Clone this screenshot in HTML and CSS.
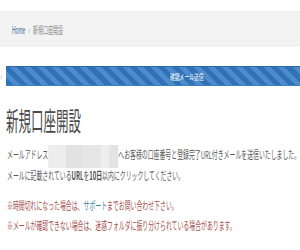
FILE: index.html
```html
<!DOCTYPE html>
<html lang="ja">
<head>
<meta charset="utf-8">
<title>新規口座開設</title>
<link rel="stylesheet" href="styles.css">
</head>
<body>
<nav class="crumb">
  <div class="crumb-text"><a class="crumb-home" href="#">Home</a><span class="crumb-sep">›</span><span class="crumb-cur">新規口座開設</span></div>
</nav>
<div class="steps">
  <span class="steps-prev">‹</span>
  <div class="steps-bar"><span class="steps-label">確認メール送信</span></div>
</div>
<h1 class="title"><span class="title-text">新規口座開設</span></h1>
<div class="body">
  <div class="body-inner">
    <p class="para">メールアドレス<span class="masked"></span>へお客様の口座番号と登録完了URL付きメールを送信いたしました。<br>メールに記載されている<b>URL</b>を<b>10日</b>以内にクリックしてください。</p>
    <p class="para note">※時間切れになった場合は、<a class="link" href="#">サポート</a>までお問い合わせ下さい。<br>※メールが確認できない場合は、迷惑フォルダに振り分けられている場合があります。</p>
  </div>
</div>
</body>
</html>
```
FILE: styles.css
```css
html, body {
  margin: 0;
  padding: 0;
  background: #fff;
}
body {
  font-family: "Noto Sans CJK JP", "Noto Sans", sans-serif;
  color: #5a5a5a;
  overflow: hidden;
}
.crumb {
  margin-top: 11px;
  height: 36px;
  background: #f3f3f3;
  border-top: 1px solid #ededed;
  box-sizing: border-box;
  display: flex;
  align-items: center;
  padding-left: 12px;
}
.crumb-text {
  font-family: "Liberation Sans", "Noto Sans CJK JP", sans-serif;
  font-size: 10px;
  white-space: nowrap;
  transform: scaleX(0.5);
  transform-origin: 0 50%;
}
.crumb-home {
  color: #3f6f9f;
  text-decoration: none;
}
.crumb-sep {
  color: #aaa;
  margin: 0 6px;
}
.crumb-cur {
  color: #8f8f8f;
}
.steps {
  margin-top: 19px;
  display: flex;
  align-items: center;
  height: 20px;
}
.steps-prev {
  width: 6px;
  color: #ccc;
  font-size: 10px;
  line-height: 20px;
  overflow: hidden;
}
.steps-bar {
  flex: 1;
  height: 20px;
  box-sizing: border-box;
  border-top: 1px solid #2c68a6;
  border-bottom: 1px solid #3f7fbf;
  background: repeating-linear-gradient(45deg, #2f72b6 0 5px, #4d8bca 5px 10px);
  display: flex;
  align-items: center;
  padding-left: 164px;
}
.steps-label {
  color: #fff;
  font-size: 8px;
  white-space: nowrap;
  transform: scaleX(0.6);
  transform-origin: 0 50%;
}
.title {
  margin: 20px 0 0 6px;
  font-size: 26px;
  line-height: 28px;
  font-weight: normal;
  color: #4a4a4a;
  white-space: nowrap;
}
.title-text {
  display: inline-block;
  transform: scaleX(0.48);
  transform-origin: 0 50%;
}
.body {
  margin: 10px 0 0 7px;
}
.body-inner {
  width: 560px;
  transform: scaleX(0.535);
  transform-origin: 0 0;
}
.para {
  margin: 0 0 10px;
  font-size: 11px;
  line-height: 20px;
  white-space: nowrap;
  color: #5a5a5a;
}
.para b {
  font-weight: bold;
  color: #4a4a4a;
}
.masked {
  display: inline-block;
  width: 131px;
  height: 23px;
  vertical-align: middle;
  margin: -3px 0;
  background: linear-gradient(90deg, #ededed 0 25%, #e2e2e2 25% 50%, #e6e6e6 50% 75%, #eeeeee 75% 87%, #e4e4e4 87% 100%);
}
.note {
  color: #a4504b;
}
.link {
  color: #3f82a6;
  text-decoration: none;
}
```
